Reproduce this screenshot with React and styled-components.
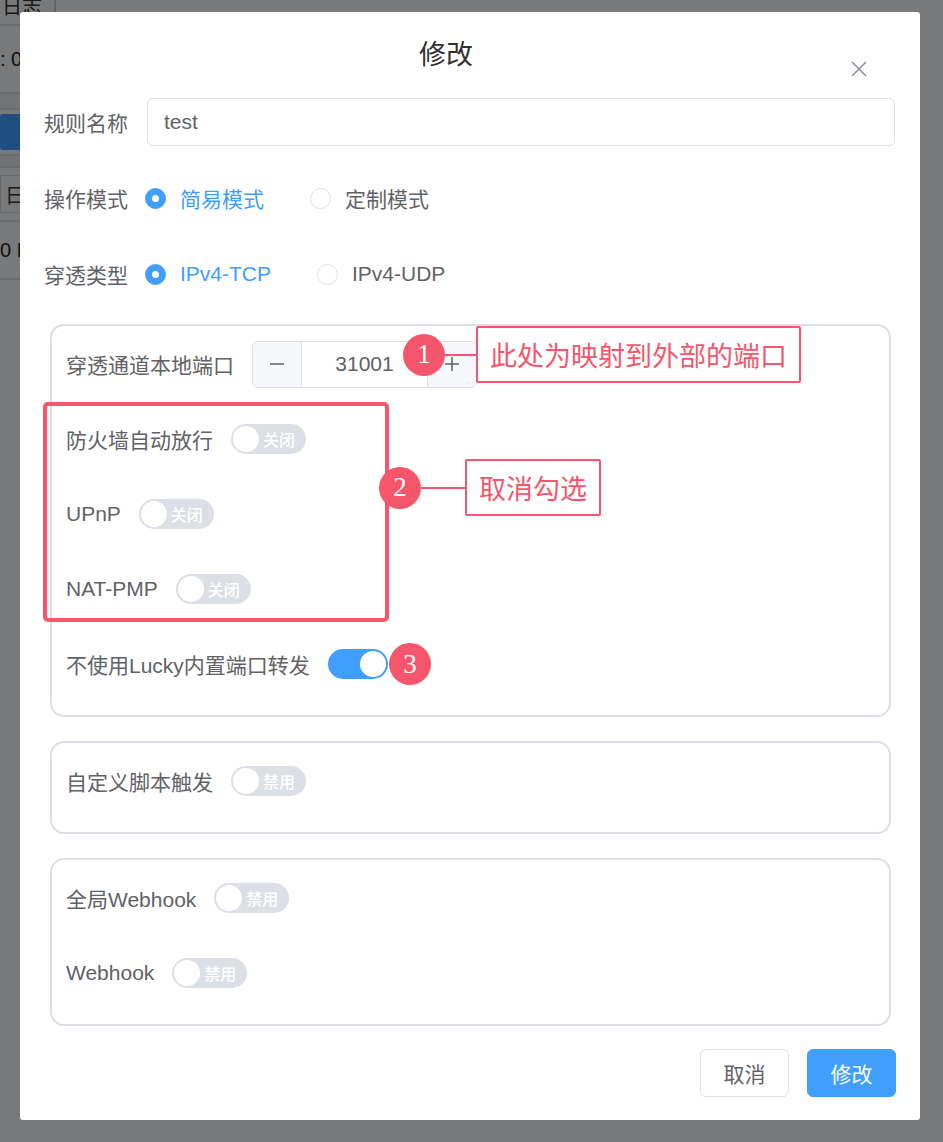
import React from 'react'
import styled, { createGlobalStyle } from 'styled-components'

const GlobalStyle = createGlobalStyle`
  html, body {
    margin: 0;
    padding: 0;
    background: #eef0f3;
  }
  body {
    font-family: "Liberation Sans", "Noto Sans CJK SC", sans-serif;
    color: #606266;
  }
`

const RED = '#f5566b'
const BLUE = '#409eff'

// ---- page behind the dialog ----
const Page = styled.div`
  position: relative;
  width: 943px;
  height: 1142px;
  overflow: hidden;
  background: #f0f2f5;
`

const BgList = styled.div`
  display: flex;
  flex-direction: column;
  width: 300px;
  font-size: 20px;
  color: #222;
`

const BgTab = styled.div`
  height: 38px;
  width: 52px;
  margin-top: -14px;
  border-right: 2px solid #c8c8c8;
  border-bottom: 2px solid #d6d8dc;
  display: flex;
  align-items: center;
  padding-left: 2px;
  color: #333;
`

const BgRow = styled.div`
  height: ${p => p.h}px;
  display: flex;
  align-items: center;
  border-bottom: 2px solid #d6d8dc;
  background: ${p => p.bg || 'transparent'};
`

const BgButton = styled.div`
  width: 120px;
  height: 36px;
  background: ${BLUE};
  border-radius: 3px;
`

const BgCell = styled.div`
  height: 36px;
  width: 60px;
  display: flex;
  align-items: center;
  padding-left: 4px;
  border: 1px solid #cfd1d6;
  color: #333;
`

const Overlay = styled.div`
  position: absolute;
  inset: 0;
  background: rgba(0, 0, 0, 0.5);
`

// ---- dialog ----
const Dialog = styled.div`
  position: absolute;
  left: 20px;
  top: 12px;
  width: 900px;
  height: 1108px;
  background: #fff;
  border-radius: 3px;
  box-sizing: border-box;
  display: flex;
  flex-direction: column;
`

const Header = styled.div`
  position: relative;
  padding: 26px 48px 0 0;
  height: 34px;
  display: flex;
  justify-content: center;
`

const Title = styled.div`
  font-size: 27px;
  line-height: 34px;
  color: #303133;
`

const Close = styled.div`
  position: absolute;
  right: 52px;
  top: 48px;
  width: 18px;
  height: 18px;
  color: #909399;
`

const Body = styled.div`
  padding: 26px 25px 0 24px;
  display: flex;
  flex-direction: column;
`

const FormRow = styled.div`
  display: flex;
  align-items: center;
  height: 48px;
  margin-bottom: ${p => (p.last ? 0 : 28)}px;
`

const Label = styled.div`
  width: ${p => (p.w ? `${p.w}px` : 'auto')};
  flex-shrink: 0;
  padding-right: ${p => (p.w ? 0 : 18)}px;
  font-size: 21px;
  color: #606266;
  white-space: nowrap;
`

const TextInput = styled.div`
  flex: 1;
  height: 48px;
  box-sizing: border-box;
  border: 1px solid #dcdfe6;
  border-radius: 6px;
  display: flex;
  align-items: center;
  padding: 0 16px;
  font-size: 21px;
  color: #606266;
`

const RadioGroup = styled.div`
  display: flex;
  align-items: center;
`

const RadioItem = styled.div`
  display: flex;
  align-items: center;
  margin-right: 46px;
  font-size: 21px;
  color: ${p => (p.checked ? BLUE : '#606266')};
`

const RadioDot = styled.span`
  width: 21px;
  height: 21px;
  box-sizing: border-box;
  border-radius: 50%;
  margin-right: 14px;
  border: 1px solid ${p => (p.checked ? BLUE : '#dcdfe6')};
  background: ${p => (p.checked ? BLUE : '#fff')};
  display: flex;
  align-items: center;
  justify-content: center;
  &::after {
    content: '';
    width: 7px;
    height: 7px;
    border-radius: 50%;
    background: #fff;
    display: ${p => (p.checked ? 'block' : 'none')};
  }
`

const Group = styled.div`
  position: relative;
  margin: ${p => p.mt}px 4px 0 6px;
  border: 2px solid #dcdfe6;
  border-radius: 14px;
  padding: 14px 14px 0 14px;
  display: flex;
  flex-direction: column;
`

const GroupRow = styled.div`
  display: flex;
  align-items: center;
  height: 48px;
  margin-bottom: 27px;
`

const NumberInput = styled.div`
  display: flex;
  width: 225px;
  height: 47px;
  box-sizing: border-box;
  border: 1px solid #dcdfe6;
  border-radius: 6px;
  overflow: hidden;
`

const NumBtn = styled.div`
  width: 48px;
  display: flex;
  align-items: center;
  justify-content: center;
  background: #f5f7fa;
  color: #606266;
  border-${p => (p.side === 'left' ? 'right' : 'left')}: 1px solid #dcdfe6;
`

const NumValue = styled.div`
  flex: 1;
  display: flex;
  align-items: center;
  justify-content: center;
  font-size: 21px;
  color: #606266;
`

const SwitchTrack = styled.div`
  position: relative;
  width: ${p => (p.on ? 60 : 75)}px;
  height: 30px;
  border-radius: 15px;
  background: ${p => (p.on ? BLUE : '#dcdfe6')};
  display: flex;
  align-items: center;
  justify-content: ${p => (p.on ? 'flex-end' : 'flex-start')};
  padding: 0 2px;
  box-sizing: border-box;
`

const SwitchKnob = styled.span`
  width: 26px;
  height: 26px;
  border-radius: 50%;
  background: #fff;
`

const SwitchText = styled.span`
  margin-left: 4px;
  font-size: 16px;
  font-weight: 500;
  color: #fff;
`

const Footer = styled.div`
  display: flex;
  justify-content: flex-end;
  gap: 18px;
  padding: 23px 24px 0 0;
`

const Button = styled.div`
  width: 89px;
  height: 48px;
  box-sizing: border-box;
  border-radius: 6px;
  display: flex;
  align-items: center;
  justify-content: center;
  font-size: 21px;
  border: 1px solid ${p => (p.primary ? BLUE : '#dcdfe6')};
  background: ${p => (p.primary ? BLUE : '#fff')};
  color: ${p => (p.primary ? '#fff' : '#606266')};
`

// ---- annotations on top ----
const Highlight = styled.div`
  position: absolute;
  left: 23px;
  top: 390px;
  width: 346px;
  height: 220px;
  box-sizing: border-box;
  border: 4px solid ${RED};
  border-radius: 5px;
`

const Callout = styled.div`
  position: absolute;
  left: ${p => p.x}px;
  top: ${p => p.y}px;
  display: flex;
  align-items: center;
`

const Badge = styled.div`
  width: 42px;
  height: 42px;
  border-radius: 50%;
  background: ${RED};
  color: #fff;
  display: flex;
  align-items: center;
  justify-content: center;
  font-family: "Liberation Serif", serif;
  font-size: 27px;
`

const Connector = styled.div`
  width: ${p => p.w}px;
  height: 2px;
  background: ${RED};
`

const Note = styled.div`
  height: 57px;
  box-sizing: border-box;
  border: 2px solid ${RED};
  border-radius: 2px;
  background: #fff;
  padding: 0 12px;
  display: flex;
  align-items: center;
  font-size: 27px;
  color: ${RED};
  white-space: nowrap;
`

function Switch({ on, text }) {
  return (
    <SwitchTrack on={on ? 1 : 0}>
      <SwitchKnob />
      {!on && <SwitchText>{text}</SwitchText>}
    </SwitchTrack>
  )
}

function Radio({ checked, children }) {
  return (
    <RadioItem checked={checked}>
      <RadioDot checked={checked} />
      {children}
    </RadioItem>
  )
}

export default function App() {
  return (
    <Page>
      <GlobalStyle />
      <BgList>
        <BgTab>日志</BgTab>
        <BgRow h={66}>: 0</BgRow>
        <BgRow h={14} bg="#e4e6ea" />
        <BgRow h={44}><BgButton /></BgRow>
        <BgRow h={10} bg="#e4e6ea" />
        <BgRow h={52}><BgCell>日</BgCell></BgRow>
        <BgRow h={56}>0 B</BgRow>
      </BgList>
      <Overlay />

      <Dialog>
        <Header>
          <Title>修改</Title>
          <Close>
            <svg width="18" height="18" viewBox="0 0 18 18">
              <path d="M2 2 L16 16 M16 2 L2 16" stroke="currentColor" strokeWidth="1.6" fill="none" />
            </svg>
          </Close>
        </Header>

        <Body>
          <FormRow>
            <Label w={103}>规则名称</Label>
            <TextInput>test</TextInput>
          </FormRow>
          <FormRow>
            <Label w={101}>操作模式</Label>
            <RadioGroup>
              <Radio checked>简易模式</Radio>
              <Radio>定制模式</Radio>
            </RadioGroup>
          </FormRow>
          <FormRow last>
            <Label w={101}>穿透类型</Label>
            <RadioGroup>
              <Radio checked>IPv4-TCP</Radio>
              <Radio>IPv4-UDP</Radio>
            </RadioGroup>
          </FormRow>

          <Group mt={26}>
            <GroupRow>
              <Label>穿透通道本地端口</Label>
              <NumberInput>
                <NumBtn side="left">
                  <svg width="16" height="16" viewBox="0 0 16 16">
                    <path d="M1 8 H15" stroke="currentColor" strokeWidth="1.5" />
                  </svg>
                </NumBtn>
                <NumValue>31001</NumValue>
                <NumBtn side="right">
                  <svg width="16" height="16" viewBox="0 0 16 16">
                    <path d="M1 8 H15 M8 1 V15" stroke="currentColor" strokeWidth="1.5" />
                  </svg>
                </NumBtn>
              </NumberInput>
            </GroupRow>
            <GroupRow>
              <Label>防火墙自动放行</Label>
              <Switch text="关闭" />
            </GroupRow>
            <GroupRow>
              <Label>UPnP</Label>
              <Switch text="关闭" />
            </GroupRow>
            <GroupRow>
              <Label>NAT-PMP</Label>
              <Switch text="关闭" />
            </GroupRow>
            <GroupRow>
              <Label>不使用Lucky内置端口转发</Label>
              <Switch on />
            </GroupRow>
          </Group>

          <Group mt={24}>
            <GroupRow>
              <Label>自定义脚本触发</Label>
              <Switch text="禁用" />
            </GroupRow>
          </Group>

          <Group mt={24}>
            <GroupRow>
              <Label>全局Webhook</Label>
              <Switch text="禁用" />
            </GroupRow>
            <GroupRow>
              <Label>Webhook</Label>
              <Switch text="禁用" />
            </GroupRow>
          </Group>
        </Body>

        <Footer>
          <Button>取消</Button>
          <Button primary>修改</Button>
        </Footer>

        <Highlight />
        <Callout x={383} y={314}>
          <Badge>1</Badge>
          <Connector w={31} />
          <Note>此处为映射到外部的端口</Note>
        </Callout>
        <Callout x={359} y={447}>
          <Badge>2</Badge>
          <Connector w={44} />
          <Note>取消勾选</Note>
        </Callout>
        <Callout x={369} y={631}>
          <Badge>3</Badge>
        </Callout>
      </Dialog>
    </Page>
  )
}
